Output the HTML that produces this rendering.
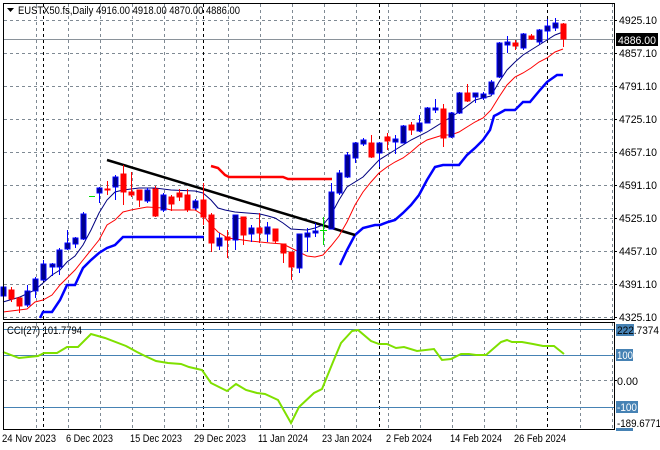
<!DOCTYPE html>
<html><head><meta charset="utf-8"><style>
html,body{margin:0;padding:0;background:#fff;}
svg{display:block;font-family:"Liberation Sans",sans-serif;}
</style></head><body>
<svg width="660" height="450" viewBox="0 0 660 450" xmlns="http://www.w3.org/2000/svg">
<rect width="660" height="450" fill="#fff"/>
<g stroke="#7f8a94" stroke-width="1" stroke-dasharray="3,3" fill="none">
<path d="M4 20.5H614M4 53.5H614M4 86.5H614M4 119.5H614M4 152.5H614M4 185.5H614M4 218.5H614M4 251.5H614M4 284.5H614M4 317.5H614M4 380.5H614"/>
<path d="M36.5 4V319M68.5 4V319M100.5 4V319M132.5 4V319M164.5 4V319M196.5 4V319M228.5 4V319M260.5 4V319M292.5 4V319M324.5 4V319M356.5 4V319M388.5 4V319M420.5 4V319M452.5 4V319M484.5 4V319M516.5 4V319M580.5 4V319M612.5 4V319"/>
<path d="M36.5 323V429M68.5 323V429M100.5 323V429M132.5 323V429M164.5 323V429M196.5 323V429M228.5 323V429M260.5 323V429M292.5 323V429M324.5 323V429M356.5 323V429M388.5 323V429M420.5 323V429M452.5 323V429M484.5 323V429M516.5 323V429M580.5 323V429M612.5 323V429"/>
</g>
<g stroke="#000" stroke-width="1" stroke-dasharray="3,3">
<path d="M43.5 4V429M203.5 4V429M379.5 4V429M547.5 4V429"/>
</g>
<path d="M4 39.5H614" stroke="#8a929a" stroke-width="1"/>
<polyline fill="none" stroke="#0000ff" stroke-width="2.5" points="40,318 43,312 52,312 60,300 67,285 75,285 83,268 91,260 99,253 107,248 115,245 123,237 204,237"/>
<polyline fill="none" stroke="#0000ff" stroke-width="2.5" points="340,265 347,250 355,235 363,228 375,225 380,225 388,222 395,220 403,213 411,205 419,195 427,180 435,167 443,165 459,165 467,155 475,148 483,140 490,130 494,116 498,114 505,110 515,110 523,102 530,102 540,90 547,82 557,75 563,75"/>
<polyline fill="none" stroke="#ff0000" stroke-width="2.5" points="211,166 218,168 225,175 229,177 283,177 288,179 332,179"/>
<line x1="107" y1="160" x2="355" y2="235" stroke="#000" stroke-width="2.5"/>
<polyline fill="none" stroke="#000080" stroke-width="1" points="3,302 20,297 35,290 43,283 52,275 60,270 67,262 75,256 83,245 91,230 99,213 107,200 115,192 123,190 139,188 155,188 171,190 195,191 203,193 211,200 218,208 225,210 235,212 260,214 268,216 275,218 283,223 291,229 307,230 315,228 323,225 331,215 339,200 347,187 363,177 379,160 395,150 411,140 427,132 443,122 459,112 475,100 491,96 499,82 507,70 515,62 523,55 531,50 539,45 547,40 555,35 563,32"/>
<polyline fill="none" stroke="#ff0000" stroke-width="1" points="3,312 27,309 35,302 43,300 52,295 60,285 67,278 75,270 83,260 91,250 99,240 107,225 115,220 123,212 131,210 147,207 163,208 171,210 195,210 203,215 211,225 218,232 228,238 250,241 270,243 283,244 291,248 299,252 307,256 315,257 323,255 331,246 339,236 347,222 355,205 363,192 371,182 379,173 387,167 395,162 403,158 411,152 419,145 427,140 443,135 451,135 459,132 467,127 475,122 483,118 491,110 499,97 507,85 515,77 523,73 531,68 539,62 547,58 555,52 563,49"/>
<g stroke-width="1">
<g stroke="#0000ff" fill="#00008b">
<path d="M3.5 285V298M27.5 285V307M35.5 277V298M43.5 260V281M52.5 263V276M59.5 248V275M67.5 230V250M75.5 237V248M83.5 212V240M99.5 187V203M115.5 175V200M147.5 188V203M163.5 193V212M195.5 199V210M219.5 233V250M235.5 215V250M251.5 225V242M267.5 222V242M299.5 234V273M307.5 228V252M315.5 223V237M331.5 183V229M339.5 170V195M347.5 152V178M355.5 142V163M363.5 138V146M379.5 142V167M395.5 135V154M403.5 125V143M419.5 115V132M427.5 107V123M435.5 99V113M451.5 112V138M459.5 92V114M475.5 93V103M483.5 92V100M491.5 80V95M499.5 42V78M507.5 36V53M523.5 33V50M539.5 29V45M547.5 19V40M555.5 18V31"/>
<rect x="1" y="287" width="5" height="9"/><rect x="25" y="291" width="5" height="14"/><rect x="33" y="279" width="5" height="12"/><rect x="41" y="264" width="5" height="16"/><rect x="50" y="264" width="5" height="3"/><rect x="57" y="250" width="5" height="17"/><rect x="65" y="243" width="5" height="6"/><rect x="73" y="238" width="5" height="6"/><rect x="81" y="214" width="5" height="25"/><rect x="97" y="188" width="5" height="5"/><rect x="113" y="177" width="5" height="10"/><rect x="145" y="190" width="5" height="11"/><rect x="161" y="195" width="5" height="15"/><rect x="193" y="201" width="5" height="7"/><rect x="217" y="238" width="5" height="8"/><rect x="233" y="215" width="5" height="25"/><rect x="249" y="228" width="5" height="6"/><rect x="265" y="227" width="5" height="7"/><rect x="297" y="234" width="5" height="34"/><rect x="305" y="233" width="5" height="4"/><rect x="313" y="231" width="5" height="2"/><rect x="329" y="192" width="5" height="37"/><rect x="337" y="173" width="5" height="20"/><rect x="345" y="155" width="5" height="22"/><rect x="353" y="143" width="5" height="15"/><rect x="361" y="140" width="5" height="4"/><rect x="377" y="143" width="5" height="10"/><rect x="393" y="139" width="5" height="3"/><rect x="401" y="126" width="5" height="17"/><rect x="417" y="123" width="5" height="8"/><rect x="425" y="108" width="5" height="15"/><rect x="433" y="108" width="5" height="2"/><rect x="449" y="113" width="5" height="24"/><rect x="457" y="93" width="5" height="20"/><rect x="473" y="93" width="5" height="4"/><rect x="481" y="94" width="5" height="4"/><rect x="489" y="82" width="5" height="12"/><rect x="497" y="43" width="5" height="34"/><rect x="505" y="42" width="5" height="3"/><rect x="521" y="34" width="5" height="14"/><rect x="537" y="30" width="5" height="12"/><rect x="545" y="26" width="5" height="5"/><rect x="553" y="23" width="5" height="5"/>
</g>
<g stroke="#ff0000" fill="#ff0000">
<path d="M11.5 287V302M19.5 297V313M107.5 181V195M123.5 165V205M131.5 172V197M139.5 190V207M155.5 186V217M171.5 195V211M179.5 189V201M187.5 189V212M203.5 183V225M211.5 213V252M227.5 230V258M243.5 217V245M259.5 213V243M275.5 229V243M283.5 244V263M291.5 252V280M371.5 135V158M387.5 133V150M411.5 122V135M443.5 104V147M467.5 84V102M515.5 40V50M531.5 34V40M563.5 23V47"/>
<rect x="9" y="290" width="5" height="9"/><rect x="17" y="298" width="5" height="8"/><rect x="105" y="189" width="5" height="1"/><rect x="121" y="174" width="5" height="18"/><rect x="129" y="192" width="5" height="3"/><rect x="137" y="190" width="5" height="10"/><rect x="153" y="189" width="5" height="27"/><rect x="169" y="197" width="5" height="7"/><rect x="177" y="193" width="5" height="4"/><rect x="185" y="195" width="5" height="15"/><rect x="201" y="200" width="5" height="17"/><rect x="209" y="215" width="5" height="28"/><rect x="225" y="237" width="5" height="3"/><rect x="241" y="217" width="5" height="18"/><rect x="257" y="228" width="5" height="5"/><rect x="273" y="229" width="5" height="12"/><rect x="281" y="244" width="5" height="9"/><rect x="289" y="252" width="5" height="15"/><rect x="369" y="143" width="5" height="14"/><rect x="385" y="137" width="5" height="4"/><rect x="409" y="125" width="5" height="5"/><rect x="441" y="109" width="5" height="29"/><rect x="465" y="93" width="5" height="8"/><rect x="513" y="43" width="5" height="3"/><rect x="529" y="36" width="5" height="3"/><rect x="561" y="24" width="5" height="15"/>
</g>
<path d="M89 196.5H95M320 230.5H327M323.5 217V245" stroke="#00e000"/>
</g>
<path d="M4 329.5H614M4 355.5H614M4 407.5H614" stroke="#4682b4" stroke-width="1"/>
<polyline fill="none" stroke="#7fe000" stroke-width="2" points="3,352 19,358 38,356 44,353 57,353 67,347 78,347 91,334 105,338 126,346 137,352 145,356 156,361 168,363 181,364 189,367 202,370 211,383 227,391 236,384 246,390 257,393 265,394 278,400 291,423 299,407 314,393 322,389 333,362 341,343 352,331 358,330 371,341 379,344 387,344 396,348 404,347 417,351 434,349 442,360 451,359 461,354 469,354 476,355 486,355 501,342 507,340 512,342 522,342 533,344 543,346 554,346 564,354"/>
<path d="M3.5 3.5H614.5V319.5H3.5ZM3.5 322.5H614.5V429.5H3.5Z" fill="none" stroke="#000" stroke-width="1"/>
<path d="M614 20.5h3M614 53.5h3M614 86.5h3M614 119.5h3M614 152.5h3M614 185.5h3M614 218.5h3M614 251.5h3M614 284.5h3M614 317.5h3M614 380.5h3" stroke="#000"/>
<g font-size="11" fill="#000">
<text x="619" y="24" textLength="38" lengthAdjust="spacingAndGlyphs">4925.10</text>
<text x="619" y="57" textLength="38" lengthAdjust="spacingAndGlyphs">4857.10</text>
<text x="619" y="90" textLength="38" lengthAdjust="spacingAndGlyphs">4791.10</text>
<text x="619" y="123" textLength="38" lengthAdjust="spacingAndGlyphs">4725.10</text>
<text x="619" y="156" textLength="38" lengthAdjust="spacingAndGlyphs">4657.10</text>
<text x="619" y="189" textLength="38" lengthAdjust="spacingAndGlyphs">4591.10</text>
<text x="619" y="222" textLength="38" lengthAdjust="spacingAndGlyphs">4525.10</text>
<text x="619" y="255" textLength="38" lengthAdjust="spacingAndGlyphs">4457.10</text>
<text x="619" y="288" textLength="38" lengthAdjust="spacingAndGlyphs">4391.10</text>
<text x="619" y="321" textLength="38" lengthAdjust="spacingAndGlyphs">4325.10</text>
<rect x="616" y="33" width="42" height="13" fill="#000"/>
<text x="618" y="44" fill="#fff" textLength="38" lengthAdjust="spacingAndGlyphs">4886.00</text>
<rect x="616" y="324" width="18" height="12" fill="#4682b4"/>
<text x="617" y="334" textLength="42" lengthAdjust="spacingAndGlyphs">222.7374</text>
<rect x="616" y="349" width="17" height="12" fill="#4682b4"/>
<text x="617" y="359" fill="#fff" textLength="16" lengthAdjust="spacingAndGlyphs">100</text>
<text x="617" y="385" textLength="21" lengthAdjust="spacingAndGlyphs">0.00</text>
<rect x="616" y="401" width="22" height="12" fill="#4682b4"/>
<text x="617" y="411" fill="#fff" textLength="20" lengthAdjust="spacingAndGlyphs">-100</text>
<rect x="616" y="428" width="17" height="3" fill="#4682b4"/>
<text x="617" y="427" textLength="44" lengthAdjust="spacingAndGlyphs">-189.6771</text>
<text x="7" y="334" textLength="75" lengthAdjust="spacingAndGlyphs">CCI(27) 101.7794</text>
<text x="2" y="442" textLength="54" lengthAdjust="spacingAndGlyphs">24 Nov 2023</text>
<text x="66" y="442" textLength="47" lengthAdjust="spacingAndGlyphs">6 Dec 2023</text>
<text x="130" y="442" textLength="52" lengthAdjust="spacingAndGlyphs">15 Dec 2023</text>
<text x="194" y="442" textLength="52" lengthAdjust="spacingAndGlyphs">29 Dec 2023</text>
<text x="258" y="442" textLength="50" lengthAdjust="spacingAndGlyphs">11 Jan 2024</text>
<text x="322" y="442" textLength="50" lengthAdjust="spacingAndGlyphs">23 Jan 2024</text>
<text x="386" y="442" textLength="46" lengthAdjust="spacingAndGlyphs">2 Feb 2024</text>
<text x="450" y="442" textLength="52" lengthAdjust="spacingAndGlyphs">14 Feb 2024</text>
<text x="514" y="442" textLength="52" lengthAdjust="spacingAndGlyphs">26 Feb 2024</text>
<text x="18" y="14" textLength="222" lengthAdjust="spacingAndGlyphs">EUSTX50.fs,Daily  4916.00 4918.00 4870.00 4886.00</text>
</g>
<path d="M7 8H14L10.5 12Z" fill="#000"/>
</svg>
</body></html>
